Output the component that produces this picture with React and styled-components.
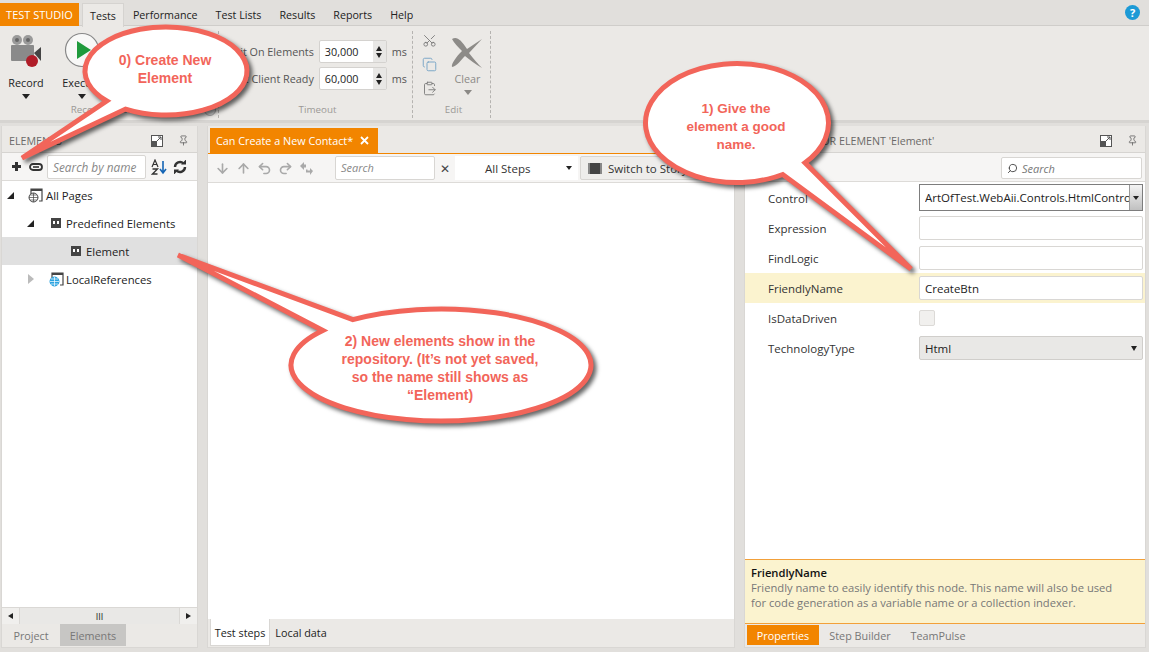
import React from "react";
import styled, { createGlobalStyle } from "styled-components";
import { Scissors, Copy, ClipboardPaste, ArrowDown, ArrowUp, Undo2, Redo2, Search as SearchIcon, Pin } from "lucide-react";

const Global = createGlobalStyle`
  html, body { margin: 0; padding: 0; background: #e1dfdc; }
  * { box-sizing: border-box; }
  body { font-family: "Open Sans", "Noto Sans", sans-serif; font-size: 11.5px; color: #333; }
`;
const Page = styled.div`position: relative; width: 1149px; height: 652px; overflow: hidden; background: #e1dfdc; display: flex; flex-direction: column;`;
const TabBar = styled.div`height: 26px; display: flex; align-items: stretch; padding-top: 3px; position: relative; border-bottom: 1px solid #cfcdca; font-size: 10.7px; color: #222;`;
const Brand = styled.div`width: 79px; background: #f28500; color: #fff; display: flex; align-items: center; justify-content: center; height: 23px; font-size: 11px;`;
const MainTab = styled.div`padding: 0 ${p => p.$active ? "7px" : "9px"}; margin-left: ${p => p.$active ? "3px" : "0"}; display: flex; align-items: center; height: ${p => p.$active ? "24px" : "23px"}; ${p => p.$active && "background:#ebe9e6;border:1px solid #d5d3d0;border-bottom:none;"}`;
const HelpDot = styled.div`position: absolute; right: 9px; top: 5px; width: 15px; height: 15px; border-radius: 50%; background: #1c9ad6; color: #fff; font-weight: 700; font-size: 11px; display: flex; align-items: center; justify-content: center;`;
const Ribbon = styled.div`height: 97px; background: #ebe9e6; display: flex; border-bottom: 3px solid #d6d4d1; padding-top: 5px;`;
const Group = styled.div`width: ${p => p.$w}px; border-right: 1px dashed #b5b3b0; display: flex; flex-direction: column; height: 87px; position: relative;`;
const GroupBody = styled.div`flex: 1; display: flex; min-height: 0;`;
const GroupLabel = styled.div`height: 16px; text-align: center; color: #9b9996; font-size: 9.8px; line-height: 16px; padding-left: ${p => p.$pl || 0}px;`;
const BigTool = styled.div`width: ${p => p.$w}px; margin-left: ${p => p.$ml || 0}px; display: flex; flex-direction: column; align-items: center; color: ${p => p.$muted ? "#8b8986" : "#222"}; font-size: 10.8px; line-height: 14px;`;
const IconSlot = styled.div`height: ${p => p.$h}px; display: flex; align-items: flex-end; justify-content: center;`;
const ToolName = styled.div`margin-top: ${p => p.$mt}px;`;
const Caret = styled.span`width: 0; height: 0; border: 4px solid transparent; border-top: 5px solid ${p => p.$c || "#222"}; border-bottom: 0; margin-top: 4px;`;
const TimeoutBody = styled.div`flex: 1; display: flex; flex-direction: column; gap: 4px; padding-top: 9px;`;
const TimeRow = styled.div`height: 23px; display: flex; align-items: center; justify-content: flex-end; padding-right: 5px; color: #555; font-size: 10.8px; white-space: nowrap;`;
const Spin = styled.div`width: 68px; height: 23px; margin: 0 5px; background: #fff; border: 1px solid #d4d2cf; border-radius: 2px; display: flex; color: #222; align-items: center;`;
const SpinValue = styled.div`flex: 1; padding-left: 5px;`;
const SpinBtns = styled.div`width: 13px; height: 100%; background: #e8e7e5; display: flex; flex-direction: column; align-items: center; justify-content: center; gap: 2px;`;
const UpTri = styled.span`width: 0; height: 0; border: 3.5px solid transparent; border-bottom: 5px solid #222; border-top: 0;`;
const DownTri = styled.span`width: 0; height: 0; border: 3.5px solid transparent; border-top: 5px solid #222; border-bottom: 0;`;
const EditIcons = styled.div`width: 32px; display: flex; flex-direction: column; align-items: center; gap: 9px; color: #777; padding-top: 2px;`;
const Expander = styled.div`position: absolute; right: 2px; bottom: 2px; width: 12px; height: 12px; border-radius: 50%; border: 1px solid #aaa; background: #ddd;`;

const Work = styled.div`flex: 1; display: flex; padding: 3px 3px 4px 1px; min-height: 0;`;
const Panel = styled.div`width: ${p => p.$w}px; margin-right: ${p => p.$mr || 0}px; display: flex; flex-direction: column; background: #fff; border: 1px solid #d9d7d4; border-width: 0 1px 1px 1px;`;
const PanelHead = styled.div`height: 27px; background: #ebe9e6; display: flex; align-items: center; padding: 3px ${p => p.$pr}px 0 7px; color: #6b6a68; font-size: 10.7px; border-bottom: 1px solid #d6d4d1; flex: none;`;
const HeadTitle = styled.div`flex: 1; white-space: nowrap;`;
const HeadIcons = styled.div`display: flex; align-items: center; gap: 15px; color: #555;`;
const ToolRow = styled.div`height: ${p => p.$h}px; background: #f6f5f4; border-bottom: 1px solid #dddbd8; display: flex; align-items: center; flex: none; padding: ${p => p.$pad || "0"};`;
const NameSearch = styled.div`width: 99px; height: 24px; margin: 0 5px 0 4px; background: #fff; border: 1px solid #d8d6d3; border-radius: 2px; font-style: italic; color: #888; padding-left: 5px; line-height: 22px; font-size: 11.8px; white-space: nowrap; overflow: hidden; flex: none;`;
const TreeArea = styled.div`flex: 1; min-height: 0; font-size: 11.3px;`;
const TreeRow = styled.div`height: 28px; display: flex; align-items: center; padding-left: ${p => p.$i}px; gap: ${p => p.$gap ?? 5}px; color: #222; background: ${p => p.$sel ? "#e0e0e0" : "transparent"};`;
const TreeText = styled.span`margin-left: ${p => p.$ml}px;`;
const ArrowOpen = styled.span`width: 0; height: 0; border-left: 7px solid transparent; border-bottom: 7px solid #222; margin-right: ${p => p.$mr}px;`;
const ArrowClosed = styled.span`width: 0; height: 0; border: 5px solid transparent; border-left: 6px solid #bbb; border-right: 0; margin-right: ${p => p.$mr}px;`;
const ElemBadge = styled.span`width: 10px; height: 10px; background: #444; position: relative; flex: none;
  &::before, &::after { content: ""; position: absolute; top: 3px; width: 2px; height: 3px; background: #fff; }
  &::before { left: 2px; }
  &::after { right: 2px; }`;
const HScroll = styled.div`height: 17px; background: #f0efed; border-top: 1px solid #dad8d5; display: flex; align-items: center; flex: none;`;
const HEnd = styled.div`width: 17px; height: 100%; display: flex; align-items: center; justify-content: center;`;
const LeftTri = styled.span`width: 0; height: 0; border: 3.5px solid transparent; border-right: 5px solid #222; border-left: 0;`;
const RightTri = styled.span`width: 0; height: 0; border: 3.5px solid transparent; border-left: 5px solid #222; border-right: 0;`;
const HThumb = styled.div`flex: 1; height: 100%; background: #e9e8e6; border-left: 1px solid #dad8d5; border-right: 1px solid #dad8d5; display: flex; justify-content: center; align-items: center; font-size: 9px; color: #222;`;
const BottomTabs = styled.div`height: ${p => p.$h}px; flex: none; background: #ebe9e6; display: flex; align-items: ${p => p.$al || "stretch"}; padding: ${p => p.$pad || "0"}; color: #777; font-size: 10.8px;`;
const BTab = styled.div`width: ${p => p.$w}px; display: flex; align-items: center; justify-content: center; background: ${p => p.$bg || "transparent"}; color: ${p => p.$c || "#777"}; height: ${p => p.$h || 22}px; ${p => p.$ex || ""}`;
const DocTabStrip = styled.div`height: 28px; flex: none; background: #ebe9e6; border-bottom: 1px solid #f28500; padding: 2px 0 0 2px; display: flex;`;
const DocTab = styled.div`width: 168px; background: #f28500; color: #fff; display: flex; align-items: center; padding-left: 6px; gap: 7px; font-size: 10.8px; white-space: nowrap;`;
const StepTools = styled.div`display: flex; gap: 6px; align-items: center; color: #a9a9a9; padding-left: 7px; width: 127px; flex: none;`;
const SmallSearch = styled.div`width: 100px; height: 24px; flex: none; background: #fff; border: 1px solid #d8d6d3; border-radius: 2px; font-style: italic; color: #888; padding-left: 5px; line-height: 22px; font-size: 11px;`;
const ClearX = styled.div`width: 20px; flex: none; text-align: center; color: #444; font-size: 12px;`;
const StepSel = styled.div`width: 123px; height: 24px; flex: none; background: #fff; display: flex; align-items: center; justify-content: space-between; padding: 0 6px 0 30px; color: #333;`;
const SmallCaret = styled.span`width: 0; height: 0; border: 3px solid transparent; border-top: 4px solid #222; border-bottom: 0;`;
const SwitchBtn = styled.div`width: 150px; height: 24px; flex: none; margin-left: 2px; background: #eeedeb; border: 1px solid #d8d6d3; border-radius: 2px; display: flex; align-items: center; gap: 6px; padding-left: 7px; color: #333; white-space: nowrap;`;
const SwitchIcon = styled.span`width: 14px; height: 11px; background: #444; border-left: 2px solid #888; border-right: 2px solid #888;`;
const Canvas = styled.div`flex: 1;`;
const PropSearch = styled.div`width: 141px; height: 22px; margin-left: auto; background: #fff; border: 1px solid #d8d6d3; border-radius: 2px; font-style: italic; color: #777; display: flex; align-items: center; gap: 4px; padding-left: 5px; font-size: 11px;`;
const PropList = styled.div`flex: 1; padding-top: 1px;`;
const PropRow = styled.div`height: 30px; display: flex; align-items: center; padding-left: 23px; padding-right: 1px; color: #333; background: ${p => p.$hi ? "#fbf3cf" : "transparent"};`;
const PropLabel = styled.div`width: 151px;`;
const Field = styled.div`width: 224px; height: 24px; background: #fff; border: 1px solid #d9d7d4; border-radius: 2px; display: flex; align-items: center; padding-left: 5px; color: #222;`;
const ComboField = styled(Field)`border: 1px solid #7d7d7d; border-radius: 0; padding-right: 0; overflow: hidden; height: 27px; margin-top: -1px; white-space: nowrap;`;
const ComboText = styled.div`flex: 1; overflow: hidden;`;
const ComboBtn = styled.div`width: 13px; height: 100%; background: linear-gradient(#f4f4f4, #c0c0c0); border-left: 1px solid #999; display: flex; align-items: center; justify-content: center; flex: none;`;
const SelectField = styled(Field)`background: #e9e8e6; justify-content: space-between; padding-right: 5px; border-color: #d0cecb;`;
const Check = styled.div`width: 16px; height: 16px; background: #f1f0ee; border: 1px solid #dcdad7; border-radius: 2px;`;
const Desc = styled.div`height: 65px; flex: none; background: #fbf3cf; border-top: 1px solid #f2a03a; border-bottom: 1px solid #f2a03a; padding: 6px 6px 0; line-height: 15px; color: #777; font-size: 11.2px;`;
const DescTitle = styled.div`font-weight: 600; color: #111; line-height: 14px;`;
const Bubbles = styled.svg`position: absolute; left: 0; top: 0; width: 1149px; height: 652px; pointer-events: none; filter: drop-shadow(3px 3px 2px rgba(0,0,0,.6));`;
const BubbleText = styled.div`position: absolute; left: ${p => p.$x}px; top: ${p => p.$y}px; width: ${p => p.$w}px; text-align: center; font-family: "Liberation Sans", Arial, sans-serif; font-weight: 700; color: #f2655a; font-size: ${p => p.$s}px; line-height: ${p => p.$lh}px;`;

const bubblePath = (cx, cy, rx, ry, a1, a2, tx, ty) => {
  const pt = a => [cx + rx * Math.cos(a * Math.PI / 180), cy + ry * Math.sin(a * Math.PI / 180)];
  const [x1, y1] = pt(a1);
  const [x2, y2] = pt(a2);
  return `M${x1} ${y1} A${rx} ${ry} 0 1 1 ${x2} ${y2} L${tx} ${ty} Z`;
};

const Dock = () => (
  <svg width="12" height="12" viewBox="0 0 12 12"><rect x="0.5" y="0.5" width="11" height="11" fill="#fff" stroke="#555" /><rect x="1" y="6" width="5" height="5" fill="#555" /><path d="M6 6 L10 2 M7 2h3v3" stroke="#555" fill="none" /></svg>
);
const SmallPin = () => <Pin size={11} strokeWidth={1.6} color="#555" />;
const PageIcon = ({ blue }) => (
  <svg width="16" height="16" viewBox="0 0 16 16" fill="none">
    <path d="M3 7V2h8l3 0v12h-3" stroke="#444" strokeWidth="1.2" />
    <rect x="3" y="2" width="11" height="2" fill="#444" />
    <circle cx="5.5" cy="10.5" r="4.5" fill={blue ? "#2aa3e0" : "#fff"} stroke={blue ? "#2aa3e0" : "#444"} />
    <path d="M1 10.5h9M5.5 6v9M2 8h7M2 13h7" stroke={blue ? "#fff" : "#444"} strokeWidth=".7" />
  </svg>
);

export default function App() {
  return (
    <Page>
      <Global />
      <TabBar>
        <Brand>TEST STUDIO</Brand>
        <MainTab $active>Tests</MainTab>
        <MainTab>Performance</MainTab>
        <MainTab>Test Lists</MainTab>
        <MainTab>Results</MainTab>
        <MainTab>Reports</MainTab>
        <MainTab>Help</MainTab>
        <HelpDot>?</HelpDot>
      </TabBar>
      <Ribbon>
        <Group $w={219}>
          <GroupBody>
            <BigTool $w={52}>
              <IconSlot $h={37}>
                <svg width="32" height="34" viewBox="0 0 32 34">
                  <circle cx="7" cy="6" r="5" fill="#9a9a9a" /><circle cx="18" cy="6" r="5" fill="#9a9a9a" />
                  <circle cx="7" cy="6" r="2" fill="#666" /><circle cx="18" cy="6" r="2" fill="#666" />
                  <rect x="1" y="11" width="23" height="16" rx="1" fill="#8a8a8a" />
                  <path d="M24 19l7-6v14z" fill="#444" />
                  <circle cx="22" cy="27" r="6" fill="#b01c28" />
                </svg>
              </IconSlot>
              <ToolName $mt={8}>Record</ToolName>
              <Caret />
            </BigTool>
            <BigTool $w={56} $ml={2}>
              <IconSlot $h={37}>
                <svg width="36" height="36" viewBox="0 0 36 36">
                  <circle cx="18" cy="18" r="16.5" fill="#f8f8f7" stroke="#888" strokeWidth="1.2" />
                  <path d="M13 9l14 9-14 9z" fill="#1f9a3c" />
                </svg>
              </IconSlot>
              <ToolName $mt={8}>Execute</ToolName>
              <Caret />
            </BigTool>
          </GroupBody>
          <GroupLabel>Record / Execute</GroupLabel>
          <Expander />
        </Group>
        <Group $w={194}>
          <TimeoutBody>
            <TimeRow>Wait On Elements<Spin><SpinValue>30,000</SpinValue><SpinBtns><UpTri /><DownTri /></SpinBtns></Spin>ms</TimeRow>
            <TimeRow>Wait Client Ready<Spin><SpinValue>60,000</SpinValue><SpinBtns><UpTri /><DownTri /></SpinBtns></Spin>ms</TimeRow>
          </TimeoutBody>
          <GroupLabel $pl={4}>Timeout</GroupLabel>
        </Group>
        <Group $w={78}>
          <GroupBody>
            <EditIcons>
              <Scissors size={15} strokeWidth={1.4} style={{ transform: "rotate(-90deg)" }} />
              <Copy size={15} strokeWidth={1.4} color="#6f9fc4" />
              <ClipboardPaste size={15} strokeWidth={1.4} />
            </EditIcons>
            <BigTool $w={45} $muted>
              <IconSlot $h={38}>
                <svg width="33" height="33" viewBox="0 0 33 33">
                  <path d="M1 3 C6 0 10 4 16 13 L31 3 L18 17 C22 22 27 28 31 32 C24 28 19 24 14 20 C10 24 6 30 1 31 C0 28 5 21 11 15 C7 11 3 7 1 3Z" fill="#8d8b88" />
                </svg>
              </IconSlot>
              <ToolName $mt={3}>Clear</ToolName>
              <Caret $c="#8b8986" />
            </BigTool>
          </GroupBody>
          <GroupLabel $pl={4}>Edit</GroupLabel>
        </Group>
      </Ribbon>
      <Work>
        <Panel $w={197} $mr={9}>
          <PanelHead $pr={8}>
            <HeadTitle>ELEMENTS</HeadTitle>
            <HeadIcons><Dock /><SmallPin /></HeadIcons>
          </PanelHead>
          <ToolRow $h={28} $pad="0 0 0 9px">
            <svg width="11" height="11" viewBox="0 0 11 11" style={{ marginRight: 7 }}><path d="M4 1h3v3h3v3H7v3H4V7H1V4h3z" fill="#333" /></svg>
            <svg width="14" height="8" viewBox="0 0 14 8" fill="none"><rect x="1" y="1" width="12" height="6" rx="3" stroke="#333" strokeWidth="1.8" /><path d="M4 4h6" stroke="#333" strokeWidth="1.6" /></svg>
            <NameSearch>Search by name</NameSearch>
            <svg width="16" height="16" viewBox="0 0 16 16" style={{ marginRight: 6 }}><path d="M1 8l3-7 3 7M2.2 5.5h3.6" stroke="#333" strokeWidth="1.2" fill="none" /><path d="M12 2v11M9 10l3 4 3-4" stroke="#1565b5" strokeWidth="1.6" fill="none" /><path d="M1.5 10h5l-5 5h5" stroke="#333" strokeWidth="1.3" fill="none" /></svg>
            <svg width="14" height="14" viewBox="0 0 14 14" fill="none"><path d="M2 7a5 5 0 0 1 8.5-3.5M12 7a5 5 0 0 1-8.5 3.5" stroke="#333" strokeWidth="2.4" /><path d="M8 4.5h5V-.5zM6 9.5H1v5z" fill="#333" /></svg>
          </ToolRow>
          <TreeArea>
            <TreeRow $i={5} $gap={0}><ArrowOpen $mr={14} /><PageIcon /><TreeText $ml={2}>All Pages</TreeText></TreeRow>
            <TreeRow $i={25} $gap={0}><ArrowOpen $mr={17} /><ElemBadge /><TreeText $ml={5}>Predefined Elements</TreeText></TreeRow>
            <TreeRow $i={69} $sel><ElemBadge />Element</TreeRow>
            <TreeRow $i={26} $gap={0}><ArrowClosed $mr={15} /><PageIcon blue /><TreeText $ml={1}>LocalReferences</TreeText></TreeRow>
          </TreeArea>
          <HScroll>
            <HEnd><LeftTri /></HEnd>
            <HThumb>III</HThumb>
            <HEnd><RightTri /></HEnd>
          </HScroll>
          <BottomTabs $h={23} $pad="0 0 1px 0">
            <BTab $w={58}>Project</BTab>
            <BTab $w={66} $bg="#c7c6c4">Elements</BTab>
          </BottomTabs>
        </Panel>
        <Panel $w={528} $mr={9}>
          <DocTabStrip>
            <DocTab>Can Create a New Contact*
              <svg width="9" height="9" viewBox="0 0 9 9"><path d="M1 1l7 7M8 1L1 8" stroke="#fff" strokeWidth="1.8" /></svg>
            </DocTab>
          </DocTabStrip>
          <ToolRow $h={29}>
            <StepTools>
              <ArrowDown size={15} strokeWidth={2.6} /><ArrowUp size={15} strokeWidth={2.6} /><Undo2 size={15} strokeWidth={2.6} /><Redo2 size={15} strokeWidth={2.6} />
              <svg width="15" height="15" viewBox="0 0 15 15" fill="#a9a9a9"><path d="M1 5l4-4v2.5h2v3H5V9zM14 10l-3 4v-2.5H7v-3h1.5v1H11V7z" /></svg>
            </StepTools>
            <SmallSearch>Search</SmallSearch>
            <ClearX>✕</ClearX>
            <StepSel>All Steps<SmallCaret /></StepSel>
            <SwitchBtn><SwitchIcon />Switch to Storyboard</SwitchBtn>
          </ToolRow>
          <Canvas />
          <BottomTabs $h={28} $al="flex-start" $pad="0 0 1px 2px">
            <BTab $w={60} $h={27} $bg="#fff" $c="#222" $ex="border:1px solid #d9d7d4;border-top:none;">Test steps</BTab>
            <BTab $w={62} $h={27} $c="#222">Local data</BTab>
          </BottomTabs>
        </Panel>
        <Panel $w={402}>
          <PanelHead $pr={7}>
            <HeadTitle>PROPERTIES FOR ELEMENT 'Element'</HeadTitle>
            <HeadIcons><Dock /><SmallPin /></HeadIcons>
          </PanelHead>
          <ToolRow $h={29} $pad="2px 3px 0 0">
            <PropSearch><SearchIcon size={11} style={{ transform: "scaleX(-1)" }} color="#444" />Search</PropSearch>
          </ToolRow>
          <PropList>
            <PropRow><PropLabel>Control</PropLabel><ComboField><ComboText>ArtOfTest.WebAii.Controls.HtmlControls</ComboText><ComboBtn><SmallCaret /></ComboBtn></ComboField></PropRow>
            <PropRow><PropLabel>Expression</PropLabel><Field /></PropRow>
            <PropRow><PropLabel>FindLogic</PropLabel><Field /></PropRow>
            <PropRow $hi><PropLabel>FriendlyName</PropLabel><Field>CreateBtn</Field></PropRow>
            <PropRow><PropLabel>IsDataDriven</PropLabel><Check /></PropRow>
            <PropRow><PropLabel>TechnologyType</PropLabel><SelectField>Html<DownTri /></SelectField></PropRow>
          </PropList>
          <Desc>
            <DescTitle>FriendlyName</DescTitle>
            Friendly name to easily identify this node. This name will also be used<br />
            for code generation as a variable name or a collection indexer.
          </Desc>
          <BottomTabs $h={23} $pad="1px 0 0 2px">
            <BTab $w={72} $h={20} $bg="#f28500" $c="#fff">Properties</BTab>
            <BTab $w={82} $h={20}>Step Builder</BTab>
            <BTab $w={74} $h={20}>TeamPulse</BTab>
          </BottomTabs>
        </Panel>
      </Work>
      <Bubbles viewBox="0 0 1149 652">
        <g fill="#fff" stroke="#f2655a" strokeWidth="5" strokeLinejoin="miter">
          <path d={bubblePath(166, 71, 81, 44, 137, 120, 22, 158)} />
          <path d={bubblePath(737, 123, 91.5, 59.5, 60, 42, 911, 269)} />
          <path d={bubblePath(441, 365, 150, 56, 234, 218, 178, 255)} />
        </g>
      </Bubbles>
      <BubbleText $x={90} $y={51} $w={150} $s={14} $lh={18}>0) Create New<br />Element</BubbleText>
      <BubbleText $x={656} $y={100} $w={160} $s={13.5} $lh={18}>1) Give the<br />element a good<br />name.</BubbleText>
      <BubbleText $x={310} $y={332} $w={260} $s={14} $lh={18}>2) New elements show in the<br />repository. (It’s not yet saved,<br />so the name still shows as<br />“Element)</BubbleText>
    </Page>
  );
}
